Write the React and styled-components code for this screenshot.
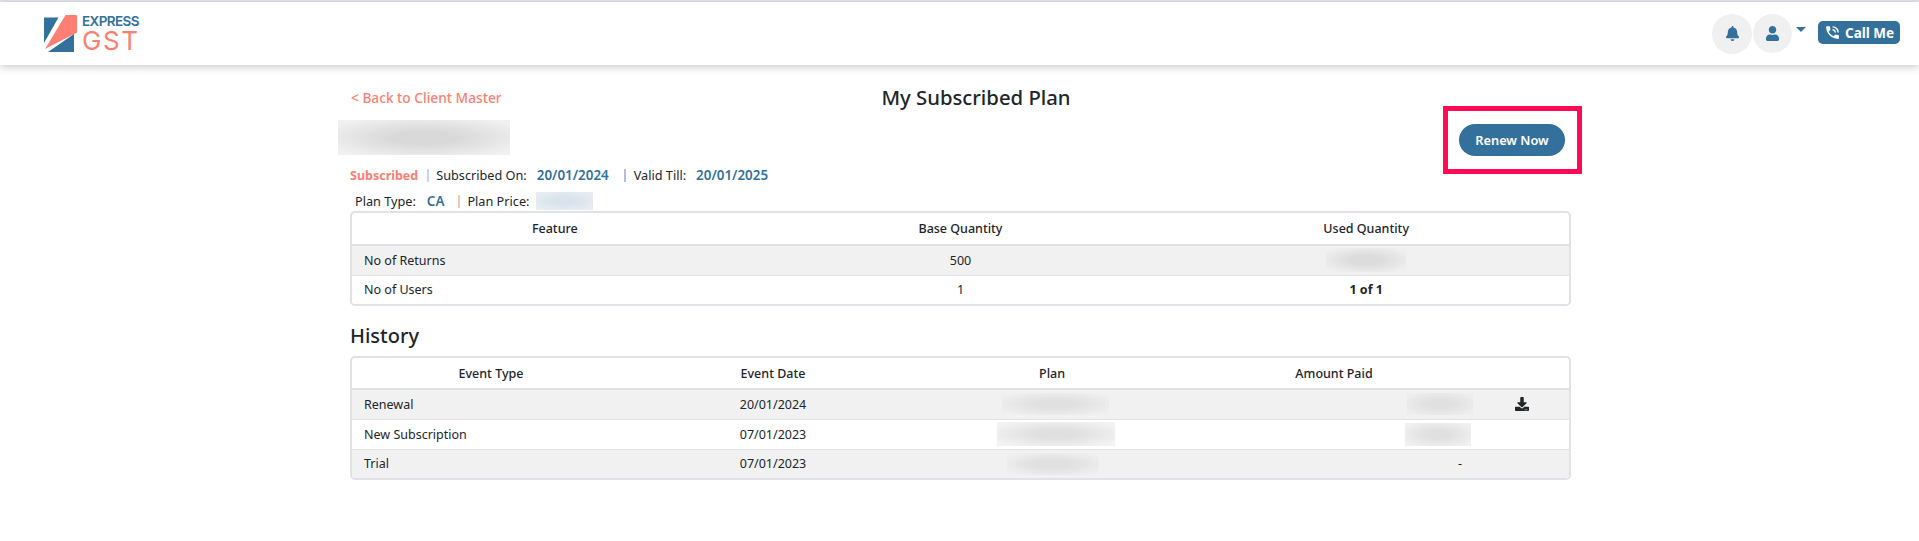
import React from "react";
import styled, { createGlobalStyle } from "styled-components";
import { FaBell, FaUser, FaDownload } from "react-icons/fa";
import { MdPhoneInTalk } from "react-icons/md";

const Global = createGlobalStyle`
  html, body { margin: 0; padding: 0; background: #fff; }
  body { font-family: "Noto Sans", "Open Sans", sans-serif; font-size: 12.5px; color: #212529; overflow: hidden; }
  * { box-sizing: border-box; }
`;

const Page = styled.div`
  width: 1919px;
  height: 541px;
  border-top: 2px solid #e4e4f4;
`;

const Header = styled.header`
  height: 63px;
  background: #fff;
  box-shadow: 0 2px 8px rgba(0, 0, 0, 0.22);
  display: flex;
  align-items: center;
  justify-content: space-between;
  padding: 0 19px 0 43px;
`;

const Logo = styled.div`
  display: flex;
  align-items: center;
  gap: 4px;
  margin-top: -1px;
`;

const LogoWords = styled.div`
  display: flex;
  flex-direction: column;
  width: 58px;
`;

const LogoTop = styled.span`
  font-family: Inter, sans-serif;
  font-size: 13.5px;
  line-height: 15px;
  letter-spacing: -0.6px;
  font-weight: 600;
  color: #33709c;
`;

const LogoBottom = styled.span`
  font-family: Inter, sans-serif;
  font-size: 26px;
  line-height: 23px;
  font-weight: 400;
  letter-spacing: 1.6px;
  color: #fd7e72;
`;

const Actions = styled.div`
  display: flex;
  align-items: center;
`;

const Round = styled.button`
  width: ${(p) => p.$size}px;
  height: ${(p) => p.$size}px;
  border: 0;
  padding: 0;
  border-radius: 50%;
  background: #f0f0f0;
  color: #33709c;
  display: flex;
  align-items: center;
  justify-content: center;
  font-size: 15px;
  margin-right: 1px;
`;

const Caret = styled.span`
  width: 0;
  height: 0;
  border-left: 5px solid transparent;
  border-right: 5px solid transparent;
  border-top: 5px solid #33709c;
  margin: -8px 12px 0 3px;
`;

const CallMe = styled.button`
  height: 23px;
  width: 82px;
  border: 0;
  padding: 0 0 0 6px;
  margin-top: -2px;
  border-radius: 5px;
  background: #33709c;
  color: #fff;
  display: flex;
  align-items: center;
  gap: 4px;
  font-family: inherit;
  font-size: 13.5px;
  font-weight: 700;
`;

const Main = styled.main`
  width: 1221px;
  margin-left: 350px;
`;

const Top = styled.div`
  display: flex;
  justify-content: space-between;
  align-items: flex-start;
`;

const Summary = styled.div`
  flex: none;
  width: 620px;
`;

const TitleRow = styled.div`
  position: relative;
  height: 41px;
  padding-top: 24px;
`;

const BackLink = styled.a`
  color: #fd7e72;
  font-size: 13.7px;
  font-weight: 500;
  line-height: 18px;
  display: block;
  margin-left: 1px;
`;

const Title = styled.h1`
  position: absolute;
  left: 476px;
  top: 18px;
  width: 300px;
  margin: 0;
  text-align: center;
  font-size: 20.3px;
  line-height: 28px;
  font-weight: 500;
  white-space: nowrap;
`;

const Blur = styled.div`
  width: ${(p) => p.$w}px;
  height: ${(p) => p.$h}px;
  background: ${(p) => p.$bg};
  overflow: hidden;
  flex: none;
  &::before {
    content: "";
    display: block;
    width: 100%;
    height: 100%;
    background: radial-gradient(ellipse 62% 62% at 50% 50%, ${(p) => p.$fg} 30%, transparent);
  }
`;

const NameBlur = styled(Blur)`
  margin: 14px 0 0 -12px;
`;

const MetaRow = styled.div`
  display: flex;
  align-items: center;
  white-space: nowrap;
  height: 26px;
  font-size: 12.7px;
  padding-left: ${(p) => p.$indent}px;
  margin-top: ${(p) => p.$top}px;
`;

const Status = styled.span`
  color: #fd7e72;
  font-weight: 700;
  font-size: 12.5px;
`;

const Sep = styled.i`
  width: 2px;
  height: 13px;
  margin: ${(p) => p.$m};
  background: ${(p) => p.$c};
`;

const Value = styled.b`
  color: #33709c;
  font-size: 13.4px;
  font-weight: 600;
  margin-left: ${(p) => p.$ml}px;
`;

const PriceBlur = styled(Blur)`
  margin-left: 7px;
`;

const Highlight = styled.div`
  width: 139px;
  height: 68px;
  margin: 41px -11px 0 0;
  padding-right: 1px;
  border: 5px solid #ff0a54;
  display: flex;
  align-items: center;
  justify-content: center;
`;

const Renew = styled.button`
  width: 106px;
  height: 32px;
  border: 0;
  border-radius: 16px;
  background: #33709c;
  color: #fff;
  font-family: inherit;
  font-size: 12.8px;
  font-weight: 600;
`;

const Card = styled.div`
  border: 2px solid #e0e2e6;
  border-radius: 5px;
  overflow: hidden;
  margin-top: ${(p) => p.$top}px;
`;

const Table = styled.table`
  width: 100%;
  border-collapse: collapse;
  table-layout: fixed;
`;

const Th = styled.th`
  height: ${(p) => p.$h || 31}px;
  font-weight: 500;
  text-align: center;
  padding: 0;
  border-bottom: 2px solid #dee2e6;
`;

const Tr = styled.tr`
  background: ${(p) => (p.$alt ? "#f1f1f1" : "#fff")};
`;

const Td = styled.td`
  height: ${(p) => p.$h || 29}px;
  padding: 0;
  border-bottom: 1px solid #dee2e6;
  text-align: center;
  tr:last-child > & { border-bottom: 0; }
`;

const Label = styled(Td)`
  text-align: left;
  padding-left: 12px;
`;

const Bold = styled.strong`
  font-weight: 700;
`;

const CellBlur = styled(Blur)`
  margin: 0 auto;
`;

const PlanCell = styled(Td)`
  padding-left: ${(p) => p.$pl}px;
`;

const AmountCell = styled(Td)`
  padding-right: ${(p) => p.$pr}px;
`;

const AmountBlur = styled(Blur)`
  margin-left: auto;
`;

const Dash = styled.div`
  text-align: right;
`;

const IconCell = styled(Td)`
  text-align: left;
  padding-left: 35px;
  font-size: 14px;
  line-height: 0;
`;

const H2 = styled.h2`
  margin: 15px 0 0;
  font-size: 20px;
  line-height: 30px;
  font-weight: 500;
`;

const LogoMark = () => (
  <svg width="35" height="37" viewBox="43 16 35 37">
    <path d="M44 18.5h14.5L44 44V19z" fill="#33709c" />
    <path d="M65.5 16H76a1 1 0 0 1 1 1v16.5L45 50z" fill="#fd7e72" />
    <path d="M48 53 74 35v18z" fill="#33709c" />
  </svg>
);

const history = [
  { type: "Renewal", date: "20/01/2024", plan: [107, 22], planPad: 6, amount: [66, 22], pr: 7, icon: true, alt: true, h: 30 },
  { type: "New Subscription", date: "07/01/2023", plan: [118, 24], planPad: 8, amount: [66, 23], pr: 9, alt: false, h: 30 },
  { type: "Trial", date: "07/01/2023", plan: [92, 22], planPad: 2, pr: 18, dash: true, alt: true, h: 29 },
];

export default function App() {
  return (
    <Page>
      <Global />
      <Header>
        <Logo>
          <LogoMark />
          <LogoWords>
            <LogoTop>EXPRESS</LogoTop>
            <LogoBottom>GST</LogoBottom>
          </LogoWords>
        </Logo>
        <Actions>
          <Round $size={40}><FaBell /></Round>
          <Round $size={39}><FaUser /></Round>
          <Caret />
          <CallMe><MdPhoneInTalk size={17} />Call Me</CallMe>
        </Actions>
      </Header>
      <Main>
        <Top>
          <Summary>
            <TitleRow>
              <BackLink>&lt; Back to Client Master</BackLink>
              <Title>My Subscribed Plan</Title>
            </TitleRow>
            <NameBlur $w={172} $h={35} $bg="#f0f0f0" $fg="#d9d9d9" />
            <MetaRow $indent={0} $top={7}>
              <Status>Subscribed</Status>
              <Sep $m="0 7px 0 9px" $c="#c4d8ea" />
              <span>Subscribed On:</span>
              <Value $ml={10}>20/01/2024</Value>
              <Sep $m="0 8px 0 15px" $c="#b9bcd2" />
              <span>Valid Till:</span>
              <Value $ml={10}>20/01/2025</Value>
            </MetaRow>
            <MetaRow $indent={5} $top={0}>
              <span>Plan Type:</span>
              <Value $ml={11}>CA</Value>
              <Sep $m="0 7px 0 14px" $c="#e8cdb4" />
              <span>Plan Price:</span>
              <PriceBlur $w={57} $h={18} $bg="#e8edf2" $fg="#d9e3ec" />
            </MetaRow>
          </Summary>
          <Highlight><Renew>Renew Now</Renew></Highlight>
        </Top>

        <Card $top={-3}>
          <Table>
            <thead>
              <tr><Th $h={32}>Feature</Th><Th $h={32}>Base Quantity</Th><Th $h={32}>Used Quantity</Th></tr>
            </thead>
            <tbody>
              <Tr $alt>
                <Label $h={30}>No of Returns</Label>
                <Td $h={30}>500</Td>
                <Td $h={30}><CellBlur $w={80} $h={24} $bg="#f0f0f0" $fg="#dcdcdc" /></Td>
              </Tr>
              <Tr>
                <Label>No of Users</Label>
                <Td>1</Td>
                <Td><Bold>1 of 1</Bold></Td>
              </Tr>
            </tbody>
          </Table>
        </Card>

        <H2>History</H2>

        <Card $top={5}>
          <Table>
            <colgroup>
              <col width="278" />
              <col width="286" />
              <col width="272" />
              <col width="292" />
              <col />
            </colgroup>
            <thead>
              <tr>
                <Th>Event Type</Th><Th>Event Date</Th><Th>Plan</Th><Th>Amount Paid</Th><Th />
              </tr>
            </thead>
            <tbody>
              {history.map((r) => (
                <Tr key={r.type} $alt={r.alt}>
                  <Label $h={r.h}>{r.type}</Label>
                  <Td $h={r.h}>{r.date}</Td>
                  <PlanCell $h={r.h} $pl={r.planPad}>
                    <CellBlur $w={r.plan[0]} $h={r.plan[1]} $bg={r.alt ? "#f0f0f0" : "#f3f3f3"} $fg="#e0e0e0" />
                  </PlanCell>
                  <AmountCell $h={r.h} $pr={r.pr}>
                    {r.dash ? <Dash>-</Dash> : <AmountBlur $w={r.amount[0]} $h={r.amount[1]} $bg={r.alt ? "#eeeeee" : "#f1f1f1"} $fg="#e0e0e0" />}
                  </AmountCell>
                  <IconCell $h={r.h}>{r.icon && <FaDownload />}</IconCell>
                </Tr>
              ))}
            </tbody>
          </Table>
        </Card>
      </Main>
    </Page>
  );
}
